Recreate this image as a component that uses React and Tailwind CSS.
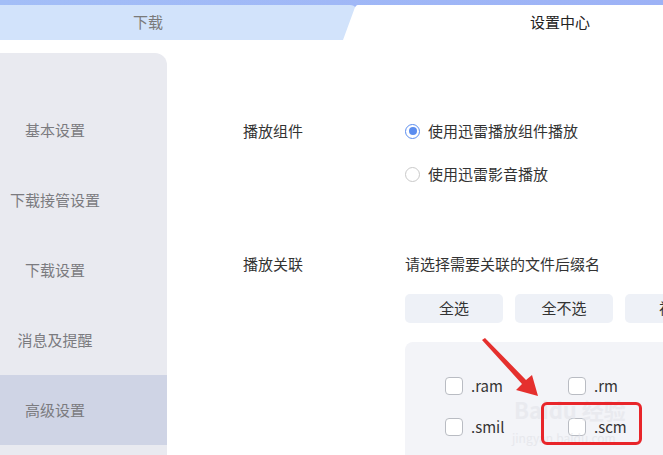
import React from "react";

const font = { fontFamily: '"Microsoft YaHei","Noto Sans CJK SC","Noto Sans",sans-serif' };

function Radio({ checked, label }) {
  return (
    <div className="flex items-center h-[22px]">
      <span
        className={
          "w-[15px] h-[15px] rounded-full border flex items-center justify-center bg-white " +
          (checked ? "border-[#5b8def]" : "border-[#c9c9c9]")
        }
      >
        {checked && <span className="w-[8px] h-[8px] rounded-full bg-[#5b8def]" />}
      </span>
      <span className="ml-[8px] text-[15px] text-[#333]">{label}</span>
    </div>
  );
}

function Check({ label }) {
  return (
    <div className="flex items-center w-[123px] h-[22px]">
      <span className="w-[18px] h-[18px] rounded-[4px] border border-[#b9bcc3] bg-white" />
      <span className="ml-[8px] text-[15px] text-[#333]">{label}</span>
    </div>
  );
}

export default function App() {
  const items = ["基本设置", "下载接管设置", "下载设置", "消息及提醒", "高级设置"];
  return (
    <div className="w-[663px] h-[455px] overflow-hidden bg-white relative" style={font}>
      {/* header */}
      <div className="h-[40px] bg-gradient-to-r from-[#a3bef7] to-[#9db2f6] flex items-end">
        <div className="w-[340px] h-[35px] bg-[#d2e3fb] flex items-center pl-[133px] text-[15px] text-[#7a7a7a]">
          下载
        </div>
        <svg width="22" height="35" viewBox="0 0 22 35" className="block">
          <path d="M0,0 H10 Q14,0 16,3 L16,35 H0 Z" fill="#d2e3fb" />
          <path d="M18,0 H22 V35 H3 L14,5 Q15.5,0 18,0 Z" fill="#ffffff" />
        </svg>
        <div className="flex-1 h-[35px] bg-white flex items-center pl-[168px] text-[15px] text-[#222]">
          设置中心
        </div>
      </div>

      <div className="flex h-[415px]">
        {/* sidebar */}
        <div className="w-[167px] mt-[13px] bg-[#e9eaf0] rounded-tr-[12px] pt-[42px] shrink-0">
          {items.map((t, i) => (
            <div
              key={t}
              className={
                "h-[70px] flex items-center " + (i === 4 ? "bg-[#cfd4e5]" : "")
              }
            >
              <span className="w-[110px] text-center text-[15px] text-[#7b7b7f]">{t}</span>
            </div>
          ))}
        </div>

        {/* main */}
        <div className="flex-1 pt-[80px] pl-[76px] flex flex-col">
          <div className="flex">
            <div className="w-[162px] h-[22px] flex items-center text-[15px] text-[#333]">播放组件</div>
            <div className="flex flex-col gap-[21px]">
              <Radio checked label="使用迅雷播放组件播放" />
              <Radio label="使用迅雷影音播放" />
            </div>
          </div>

          <div className="flex mt-[68px]">
            <div className="w-[162px] h-[22px] flex items-center text-[15px] text-[#333] shrink-0">播放关联</div>
            <div className="flex flex-col">
              <div className="h-[22px] flex items-center text-[15px] text-[#333] whitespace-nowrap">请选择需要关联的文件后缀名</div>
              <div className="flex gap-[12px] mt-[19px]">
                {["全选", "全不选", "视频"].map((b) => (
                  <div
                    key={b}
                    className="w-[98px] h-[29px] shrink-0 rounded-[5px] bg-[#eef1f7] flex items-center justify-center text-[15px] text-[#333]"
                  >
                    {b}
                  </div>
                ))}
              </div>
              <div className="mt-[19px] w-[300px] h-[150px] bg-[#f3f4f8] rounded-tl-[8px] pt-[33px] pl-[40px] flex flex-col gap-[19px]">
                <div className="flex">
                  <Check label=".ram" />
                  <Check label=".rm" />
                </div>
                <div className="flex">
                  <Check label=".smil" />
                  <Check label=".scm" />
                </div>
              </div>
            </div>
          </div>
        </div>
      </div>

      {/* watermark */}
      <div className="absolute left-[514px] top-[398px] text-[22px] font-bold leading-none text-[#e4e5ea] opacity-60 pointer-events-none">
        Baidu 经验
      </div>
      <div className="absolute left-[512px] top-[432px] text-[12px] leading-none text-[#e0e1e6] opacity-60 pointer-events-none">
        jingyan.baidu.com
      </div>

      {/* red annotation */}
      <svg className="absolute left-0 top-0" width="663" height="455" viewBox="0 0 663 455">
        <path d="M482,340 L485,338 L526,380 L532,375 L538,396 L516,390 L522,384 Z" fill="#e5302e" />
      </svg>
      <div className="absolute left-[541px] top-[402px] w-[101px] h-[43px] border-[3px] border-[#e8252a] rounded-[6px]" />
    </div>
  );
}
